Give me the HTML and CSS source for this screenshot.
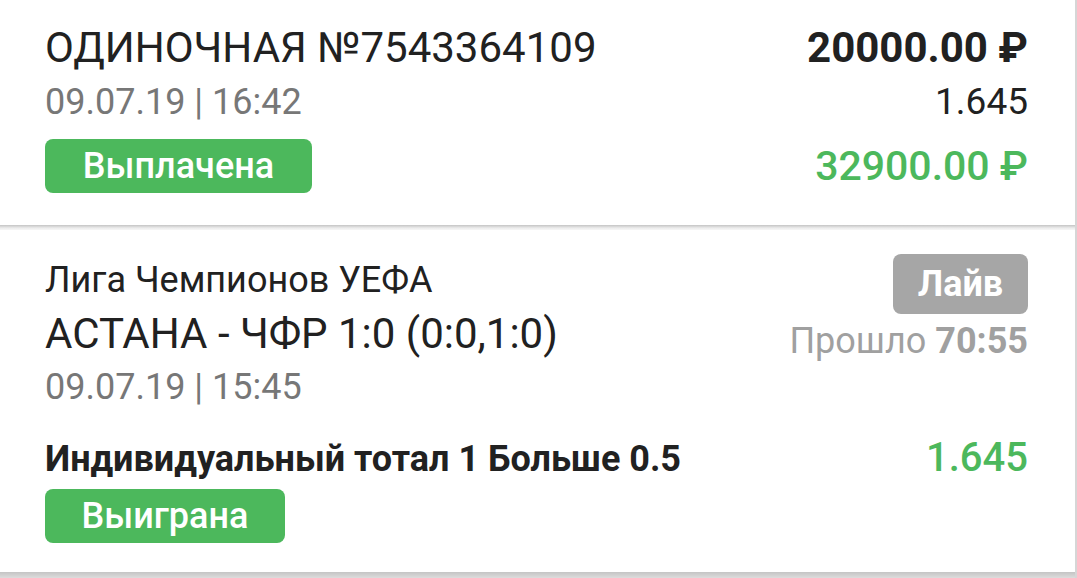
FILE: index.html
```html
<!DOCTYPE html>
<html lang="ru">
<head>
    <meta charset="UTF-8">
    <meta name="viewport" content="width=device-width, initial-scale=1.0">
    <title>Ставка №7543364109</title>
    <link rel="stylesheet" href="styles.css">
</head>
<body>
    <div class="screen">
        <div class="card bet">
            <div class="row">
                <span class="title">ОДИНОЧНАЯ №7543364109</span>
                <span class="stake">20000.00 ₽</span>
            </div>
            <div class="row row-sub">
                <span class="date">09.07.19 | 16:42</span>
                <span class="coef">1.645</span>
            </div>
            <div class="row row-status">
                <span class="badge badge-green">Выплачена</span>
                <span class="payout">32900.00 ₽</span>
            </div>
        </div>

        <div class="divider"></div>

        <div class="card event">
            <div class="event-head">
                <div class="event-info">
                    <div class="league">Лига Чемпионов УЕФА</div>
                    <div class="match">АСТАНА - ЧФР 1:0 (0:0,1:0)</div>
                    <div class="date">09.07.19 | 15:45</div>
                </div>
                <div class="event-live">
                    <span class="badge badge-gray">Лайв</span>
                    <span class="elapsed">Прошло <b>70:55</b></span>
                </div>
            </div>
            <div class="row row-outcome">
                <span class="outcome">Индивидуальный тотал 1 Больше 0.5</span>
                <span class="outcome-coef">1.645</span>
            </div>
            <span class="badge badge-green badge-won">Выиграна</span>
        </div>

        <div class="divider divider-bottom"></div>
    </div>
</body>
</html>
```

FILE: styles.css
```css
body {
    margin: 0;
    background: #fff;
    font-family: Roboto, "Noto Sans", sans-serif;
    color: #212121;
}
.screen {
    width: 1075px;
    height: 578px;
    border-right: 2px solid #d6d6d6;
    overflow: hidden;
}
.card {
    background: #fff;
    padding: 0 47px 0 45px;
}
.bet {
    height: 225px;
    padding-top: 22px;
    box-sizing: border-box;
}
.row {
    display: flex;
    justify-content: space-between;
    align-items: baseline;
}
.title {
    font-size: 42px;
    line-height: 52px;
}
.stake {
    font-size: 42px;
    font-weight: 700;
    line-height: 52px;
}
.row-sub {
    margin-top: 3px;
}
.date {
    font-size: 36px;
    line-height: 50px;
    color: #777;
}
.coef {
    font-size: 37px;
    line-height: 50px;
}
.row-status {
    align-items: center;
    margin-top: 12px;
}
.badge {
    display: inline-block;
    color: #fff;
    font-weight: 500;
    border-radius: 8px;
    text-align: center;
}
.badge-green {
    background: #4cb85c;
    font-size: 36px;
    line-height: 54px;
    width: 267px;
}
.payout {
    font-size: 41px;
    font-weight: 500;
    color: #4cb85c;
}
.divider {
    height: 5px;
    background: linear-gradient(#c4c4c4, #ececec 60%, #f7f7f7);
}
.event {
    height: 342px;
    padding-top: 24px;
    box-sizing: border-box;
}
.event-head {
    display: flex;
    justify-content: space-between;
}
.league {
    font-size: 36px;
    line-height: 52px;
}
.match {
    font-size: 42px;
    line-height: 56px;
}
.event-live {
    display: flex;
    flex-direction: column;
    align-items: flex-end;
}
.badge-gray {
    background: #a6a6a6;
    font-size: 36px;
    font-weight: 700;
    line-height: 60px;
    width: 135px;
}
.elapsed {
    font-size: 36px;
    line-height: 54px;
    color: #a0a0a0;
}
.row-outcome {
    margin-top: 22px;
}
.outcome {
    font-size: 36px;
    font-weight: 700;
    line-height: 44px;
}
.outcome-coef {
    font-size: 40px;
    font-weight: 500;
    color: #4cb85c;
}
.badge-won {
    width: 240px;
    margin-top: 8px;
}
.divider-bottom {
    height: 6px;
    background: linear-gradient(#c4c4c4, #dcdcdc);
}
```
